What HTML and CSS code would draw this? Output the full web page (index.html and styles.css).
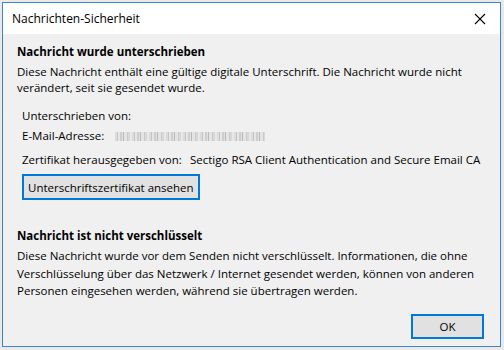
FILE: index.html
```html
<!DOCTYPE html>
<html lang="de">
<head>
<meta charset="utf-8">
<link rel="stylesheet" href="styles.css">
</head>
<body>
<div class="window">
  <div class="titlebar">
    <span class="title">Nachrichten-Sicherheit</span>
    <svg class="close" width="12" height="12" viewBox="0 0 12 12"><path d="M1 1L11 11M11 1L1 11" stroke="#000" stroke-width="1.1" fill="none"/></svg>
  </div>
  <div class="content">
    <h2 class="heading">Nachricht wurde unterschrieben</h2>
    <p class="para p1">Diese Nachricht enthält eine gültige digitale Unterschrift. Die Nachricht wurde nicht verändert, seit sie gesendet wurde.</p>
    <div class="details">
      <div class="row r1">Unterschrieben von:</div>
      <div class="row r2"><span class="label l-mail">E-Mail-Adresse:</span><span class="blur"></span></div>
      <div class="row r3"><span class="label l-cert">Zertifikat herausgegeben von:</span><span>Sectigo RSA Client Authentication and Secure Email CA</span></div>
      <button class="btn btn-cert">Unterschriftszertifikat ansehen</button>
    </div>
    <h2 class="heading h-enc">Nachricht ist nicht verschlüsselt</h2>
    <p class="para p2">Diese Nachricht wurde vor dem Senden nicht verschlüsselt. Informationen, die ohne Verschlüsselung über das Netzwerk / Internet gesendet werden, können von anderen Personen eingesehen werden, während sie übertragen werden.</p>
    <div class="footer"><button class="btn btn-ok">OK</button></div>
  </div>
</div>
</body>
</html>
```
FILE: styles.css
```css
html, body {
  margin: 0;
  padding: 0;
  background: #e9e9e9;
}
body {
  width: 504px;
  height: 350px;
  overflow: hidden;
  font-family: "Open Sans", "Noto Sans", sans-serif;
  font-size: 11.5px;
  color: #000;
}
.window {
  margin: 2px 0 0 2px;
  width: 497px;
  height: 343px;
  border: 1px solid #3b86d0;
  background: #f0f0f0;
  display: flex;
  flex-direction: column;
}
.titlebar {
  height: 31px;
  background: #fff;
  display: flex;
  align-items: center;
  justify-content: space-between;
  padding: 0 9px 0 9px;
  flex: none;
}
.title {
  font-size: 12px;
  margin-top: -1px;
}
.close {
  margin-right: 5px;
}
.content {
  padding: 10px 14px 0 14px;
  flex: 1;
  display: flex;
  flex-direction: column;
}
.heading {
  margin: 0;
  font-size: 11.5px;
  font-weight: bold;
  line-height: 16px;
}
.para {
  margin: 4px 0 0 0;
  line-height: 16px;
}
.p1 {
  padding-right: 8px;
}
.p2 {
  margin-top: 3px;
  line-height: 17.5px;
}
.details {
  margin: 12px 0 0 5px;
  display: flex;
  flex-direction: column;
  align-items: flex-start;
}
.row {
  line-height: 16px;
  display: flex;
  align-items: center;
}
.r2 {
  margin-top: 4px;
}
.r3 {
  margin-top: 8px;
}
.l-mail {
  width: 93px;
}
.l-cert {
  width: 168px;
}
.blur {
  display: inline-block;
  width: 150px;
  height: 9px;
  background:
    repeating-linear-gradient(90deg,
      #dcdcdc 0 2px, #c4c4c4 2px 3px, #e6e6e6 3px 5px, #cecece 5px 7px,
      #e0e0e0 7px 8px, #bababa 8px 9px, #e4e4e4 9px 12px, #cacaca 12px 13px,
      #d8d8d8 13px 15px, #e8e8e8 15px 17px);
}
.btn {
  font-family: inherit;
  font-size: 11.5px;
  color: #000;
  background: #e1e1e1;
  border: 2px solid #0078d7;
  border-radius: 0;
  padding: 0;
  margin: 0;
  white-space: nowrap;
}
.btn-cert {
  margin-top: 6px;
  height: 26px;
  padding: 0 4px;
  min-width: 172px;
}
.h-enc {
  margin-top: 28px;
}
.footer {
  display: flex;
  justify-content: flex-end;
  margin-top: 14px;
  padding-right: 2px;
}
.btn-ok {
  width: 73px;
  height: 25px;
}
```
